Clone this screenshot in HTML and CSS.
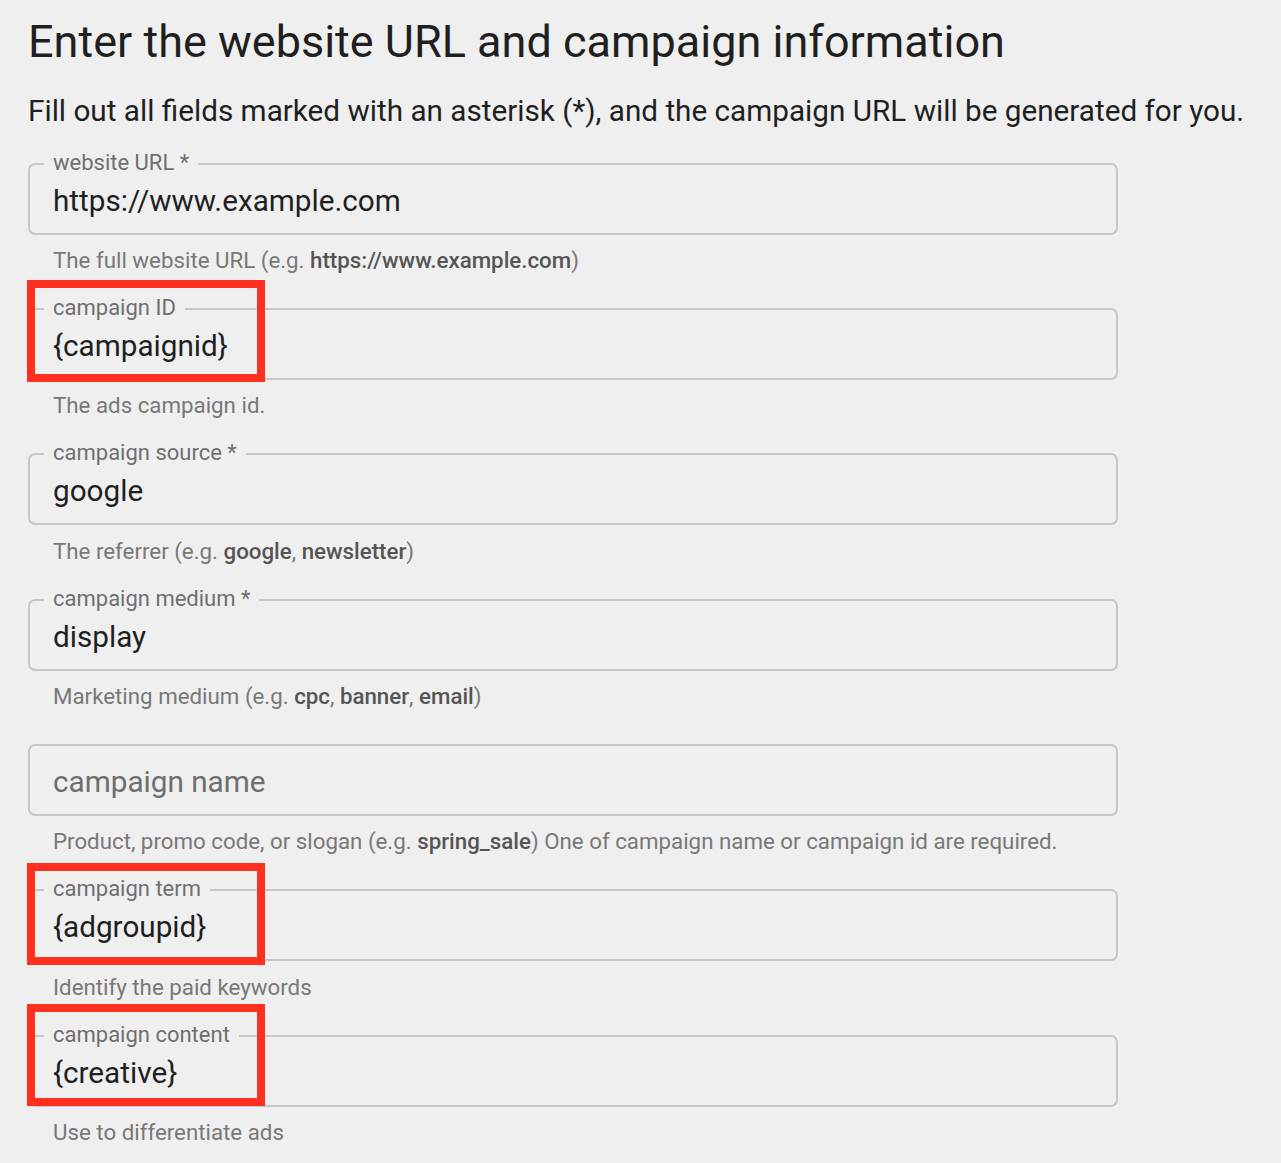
FILE: index.html
```html
<!DOCTYPE html>
<html lang="en">
<head>
<meta charset="utf-8">
<title>Campaign URL builder</title>
<link rel="stylesheet" href="styles.css">
</head>
<body>
<main class="page">
  <h1 class="title">Enter the website URL and campaign information</h1>
  <p class="subtitle">Fill out all fields marked with an asterisk (*), and the campaign URL will be generated for you.</p>

  <div class="form">
    <div class="field">
      <fieldset class="box"><legend class="label">website URL *</legend><div class="value">https://www.example.com</div></fieldset>
      <p class="helper">The full website URL (e.g. <b>https://www.example.com</b>)</p>
    </div>

    <div class="field">
      <fieldset class="box"><legend class="label">campaign ID</legend><div class="value">{campaignid}</div></fieldset>
      <p class="helper">The ads campaign id.</p>
      <span class="mark mark--id"></span>
    </div>

    <div class="field">
      <fieldset class="box"><legend class="label">campaign source *</legend><div class="value">google</div></fieldset>
      <p class="helper">The referrer (e.g. <b>google</b>, <b>newsletter</b>)</p>
    </div>

    <div class="field">
      <fieldset class="box"><legend class="label">campaign medium *</legend><div class="value">display</div></fieldset>
      <p class="helper">Marketing medium (e.g. <b>cpc</b>, <b>banner</b>, <b>email</b>)</p>
    </div>

    <div class="field field--empty">
      <fieldset class="box"><div class="value value--placeholder">campaign name</div></fieldset>
      <p class="helper">Product, promo code, or slogan (e.g. <b>spring_sale</b>) One of campaign name or campaign id are required.</p>
    </div>

    <div class="field">
      <fieldset class="box"><legend class="label">campaign term</legend><div class="value">{adgroupid}</div></fieldset>
      <p class="helper">Identify the paid keywords</p>
      <span class="mark mark--term"></span>
    </div>

    <div class="field">
      <fieldset class="box"><legend class="label">campaign content</legend><div class="value">{creative}</div></fieldset>
      <p class="helper">Use to differentiate ads</p>
      <span class="mark mark--content"></span>
    </div>
  </div>
</main>
</body>
</html>
```

FILE: styles.css
```css
html, body {
  margin: 0;
  padding: 0;
  background: #efefef;
}

body {
  font-family: Roboto, "Liberation Sans", Arial, sans-serif;
  color: #1f1f1f;
}

.page {
  padding: 15px 0 0 28px;
}

.title {
  margin: 0;
  font-size: 45px;
  line-height: 54px;
  font-weight: 400;
  color: #1f1f1f;
}

.subtitle {
  margin: 24px 0 0;
  font-size: 29.7px;
  line-height: 36px;
  font-weight: 400;
  color: #1f1f1f;
  white-space: nowrap;
}

.form {
  width: 1090px;
  margin-top: 22.8px;
}

.field {
  position: relative;
  padding-bottom: 19px;
}

.box {
  margin: 0;
  padding: 4px 14px 11px;
  border: 2px solid #c6c6c6;
  border-radius: 7px;
  min-width: 0;
}

.label {
  padding: 1px 9px 3px;
  font-size: 22px;
  line-height: 20px;
  color: #6f6f6f;
  white-space: nowrap;
}

.value {
  margin-left: 9px;
  font-size: 29.7px;
  line-height: 42px;
  color: #1f1f1f;
  white-space: nowrap;
}

.field--empty {
  padding-top: 11px;
}

.field--empty .box {
  padding-top: 15px;
}

.value--placeholder {
  color: #6e6e6e;
}

.helper {
  margin: 7.3px 0 0 25px;
  font-size: 22.3px;
  line-height: 36px;
  color: #787878;
  white-space: nowrap;
}

.helper b {
  font-weight: 500;
  color: #555555;
}

.mark {
  position: absolute;
  left: -1px;
  width: 238px;
  height: 102px;
  box-sizing: border-box;
  border: 8px solid #ff3020;
  pointer-events: none;
}

.mark--id {
  top: -17.5px;
}

.mark--term {
  top: -15px;
}

.mark--content {
  top: -20px;
}
```
